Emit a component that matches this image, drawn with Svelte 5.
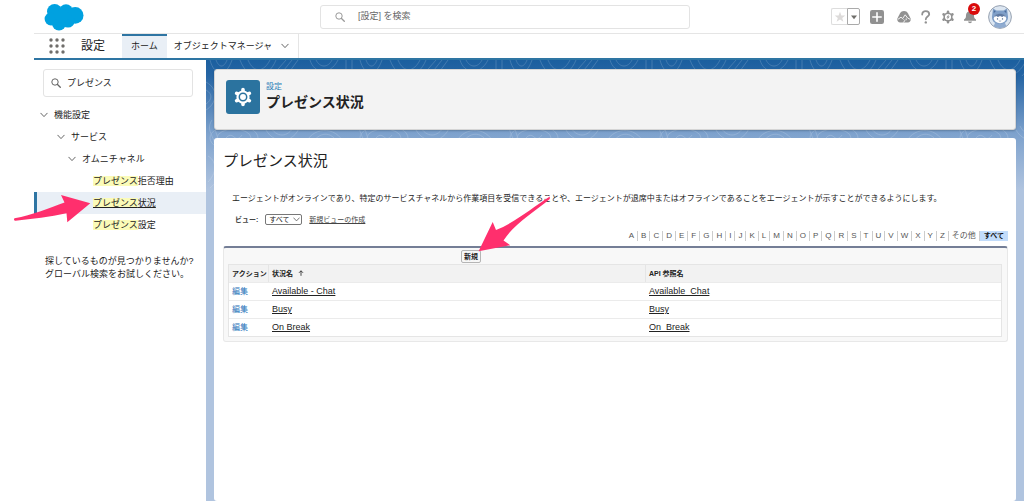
<script lang="ts">
  type Status = { label: string; apiName: string };

  const statuses: Status[] = [
    { label: 'Available - Chat', apiName: 'Available_Chat' },
    { label: 'Busy', apiName: 'Busy' },
    { label: 'On Break', apiName: 'On_Break' },
  ];

  const letters = [...'ABCDEFGHIJKLMNOPQRSTUVWXYZ', 'その他', 'すべて'];

  const branches = [
    { label: '機能設定', level: 'one' },
    { label: 'サービス', level: 'two' },
    { label: 'オムニチャネル', level: 'three' },
  ];

  const leaves = ['拒否理由', '状況', '設定'];

  let keyword = $state('プレゼンス');
  let view = $state('all');
  let activeLeaf = $state('状況');
  let activeLetter = $state('すべて');
</script>

{#snippet chevron()}
  <svg class="chevron" viewBox="0 0 8 8" aria-hidden="true">
    <path d="M0.8 2.2 4 5.6 7.2 2.2" fill="none" stroke="currentColor" stroke-width="0.9" stroke-linecap="round" />
  </svg>
{/snippet}

{#snippet magnifier()}
  <svg class="magnifier" viewBox="0 0 10 10" aria-hidden="true">
    <circle cx="4" cy="4" r="3.2" fill="none" stroke="currentColor" stroke-width="1" />
    <path d="M6.5 6.5 9.3 9.3" stroke="currentColor" stroke-width="1.3" stroke-linecap="round" />
  </svg>
{/snippet}

<!-- six-toothed cog, centred on 10,10 -->
{#snippet cog()}
  <circle cx="10" cy="10" r="6.6" fill="currentColor" />
  <path
    d="M10 2.600V17.400M3.600 6.300 16.400 13.700M3.600 13.700 16.400 6.300"
    fill="none"
    stroke="currentColor"
    stroke-width="3.600"
    stroke-linecap="round"
  />
{/snippet}

<div class="app">
  <header class="global">
    <svg class="logo" viewBox="0 0 40 28" role="img" aria-label="Salesforce">
      <g fill="#00a1e0">
        <circle cx="10.600" cy="8.600" r="7.600" />
        <circle cx="22" cy="8" r="6.800" />
        <circle cx="31.200" cy="12.400" r="8.300" />
        <circle cx="7" cy="16" r="6.400" />
        <circle cx="15" cy="20.500" r="7" />
        <circle cx="24" cy="18" r="6.600" />
        <circle cx="18" cy="13" r="7" />
      </g>
    </svg>

    <label class="search">
      {@render magnifier()}
      <input type="search" placeholder="[設定] を検索" aria-label="[設定] を検索" />
    </label>

    <div class="tools">
      <div class="favorites">
        <button aria-label="お気に入り" class="star">
          <svg viewBox="0 0 12 12"><path d="M6 .8 7.400 4.500h3.900L8.200 6.900l1.200 3.900L6 8.500l-3.400 2.300 1.200-3.900L.7 4.500h3.900z" fill="#dddbda" /></svg>
        </button>
        <button aria-label="お気に入りリスト" class="drop">
          <svg viewBox="0 0 8 8"><path d="M1 2.500h6L4 6.300z" fill="#706e6b" /></svg>
        </button>
      </div>
      <button class="tool add" aria-label="追加">
        <svg viewBox="0 0 14 14">
          <rect width="14" height="14" rx="2.200" />
          <path d="M7 2.800v8.400M2.800 7h8.400" stroke="#fff" stroke-width="1.600" stroke-linecap="round" />
        </svg>
      </button>
      <button class="tool" aria-label="Trailhead">
        <svg viewBox="0 0 14 14">
          <path d="M7 1c1.900 0 3 .9 3.900 2.300L13.400 8c1 2-.1 4.500-2.600 4.500H3.200C.7 12.500-.4 10 .6 8l2.500-4.700C4 1.900 5.100 1 7 1z" />
          <path d="M.8 9.400 4 7.200 5.600 8.600 8.200 4.800 10.600 8 13.300 9.400M6.400 12.500 7.800 10.600 6.600 9.400M9.200 8.400v1.800" fill="none" stroke="#fff" stroke-width="0.900" />
        </svg>
      </button>
      <button class="tool" aria-label="ヘルプ">
        <svg viewBox="0 0 14 14">
          <path d="M3.200 4.500C3.200 2.300 4.700 1.200 6.700 1.200S10.200 2.400 10.200 4.200C10.200 6.500 6.800 6.700 6.800 9.300" fill="none" stroke="currentColor" stroke-width="1.800" stroke-linecap="round" />
          <circle cx="6.800" cy="12.400" r="1.200" />
        </svg>
      </button>
      <button class="tool" aria-label="設定">
        <svg viewBox="0 0 20 20">
          {@render cog()}
          <circle cx="10" cy="10" r="4.400" fill="#fff" />
          <path d="M11.200 6 7.600 10.600h2L8.900 14l3.600-4.800h-2z" />
        </svg>
      </button>
      <button class="tool" aria-label="通知">
        <svg viewBox="0 0 14 14">
          <path d="M7 1.200c2.500 0 4 1.800 4 4.100 0 2.600.5 3.400 2 4.200v1.300H1V9.500c1.500-.8 2-1.600 2-4.200 0-2.300 1.500-4.100 4-4.100zM5 11.600h4c-.2 1.100-1 1.700-2 1.700s-1.800-.6-2-1.700z" />
        </svg>
        <span class="badge">2</span>
      </button>
      <button class="avatar" aria-label="プロファイルを表示">
        <svg viewBox="0 0 24 24">
          <circle cx="12" cy="12" r="11.400" fill="#dce6f1" stroke="#8d99a8" stroke-width="0.900" />
          <path d="M7 18h10l1.500 3.500-6.500 1.700-6.500-1.700z" fill="#8fabd0" />
          <path d="M5 3.600 8.500 5.400h7L19 3.600l.8 6.400C21 15 18 19 12 19S3 15 4.200 10z" fill="#7f9fc8" />
          <path d="M5.800 5.200 7.800 6.300 5.700 8.200zM18.200 5.200 16.200 6.300l2.100 1.900z" fill="#4a6c9c" />
          <ellipse cx="12" cy="13.600" rx="6.200" ry="4.600" fill="#fff" />
          <path d="M6.200 12.300C6.700 9.800 9 8.800 12 8.800s5.300 1 5.800 3.500l-2-1.200-1.600 1-2.200-1-2 1-1.800-1z" fill="#5f7aa2" />
          <circle cx="9.500" cy="13.900" r="0.700" fill="#405a80" />
          <circle cx="14.500" cy="13.900" r="0.700" fill="#405a80" />
          <path d="M10.800 15.800q1.200.9 2.400 0" fill="none" stroke="#405a80" stroke-width="0.500" />
        </svg>
      </button>
    </div>
  </header>

  <nav class="tabs" aria-label="設定">
    <button class="launcher" aria-label="アプリケーションランチャー">
      <svg viewBox="0 0 16 16">
        {#each [2, 8, 14] as y}
          {#each [2, 8, 14] as x}
            <circle cx={x} cy={y} r="1.700" fill="#706e6b" />
          {/each}
        {/each}
      </svg>
    </button>
    <span class="app-name">設定</span>
    <a class="tab current" href="#home">ホーム</a>
    <a class="tab objects" href="#objects">オブジェクトマネージャ {@render chevron()}</a>
  </nav>

  <div class="body">
    <aside>
      <label class="quick-find">
        {@render magnifier()}
        <input type="text" bind:value={keyword} aria-label="クイック検索" />
      </label>

      <ul class="tree">
        {#each branches as branch}
          <li class="branch {branch.level}">{@render chevron()}<span>{branch.label}</span></li>
        {/each}
        {#each leaves as leaf}
          <li class="leaf" class:active={leaf === activeLeaf}>
            <a href="#{leaf}" onclick={() => (activeLeaf = leaf)}><mark>プレゼンス</mark>{leaf}</a>
          </li>
        {/each}
      </ul>

      <p class="hint">探しているものが見つかりませんか?<br />グローバル検索をお試しください。</p>
    </aside>

    <main>
      <!-- contour lines behind the cards -->
      <svg class="contours" aria-hidden="true">
        <defs>
          <pattern id="contour" width="150" height="130" patternUnits="userSpaceOnUse">
            <g fill="none" stroke="#fff" stroke-width="0.800" opacity="0.200">
              <path d="M4 0C8 16 20 18 26 0M10 0c3 8 8 8 11 0M34 0C42 22 62 20 70 0M42 0c6 14 16 12 22 0M80 0 66 16M86 0 70 20M92 0 76 22M104 0c4 14 20 16 28 0M110 0c4 8 12 8 16 0M140 0v12M146 0v9" />
              <path d="M0 22C14 30 10 44 0 50M0 30c7 4 6 10 0 14M150 24c-12 8-8 22 0 26M6 60c-8 12 6 18 2 30M12 56c-10 12 6 24 0 36" />
              <ellipse cx="28" cy="78" rx="24" ry="13" />
              <ellipse cx="28" cy="78" rx="17" ry="9" />
              <path d="M20 78q4-5 8-1t8-2M20 81q6-3 14 0" />
              <path d="M58 66C66 86 88 84 94 66M64 66c6 12 18 12 24 0M100 84c4-16 30-20 38 0M106 84c6-12 20-14 26 0M114 84c3-6 8-6 12 0" />
              <path d="M2 96c10 6 8 18 0 26M8 92c12 12 6 28-4 36M142 90c-10 12-2 20 6 34M148 92c-8 10 0 20 2 22" />
            </g>
          </pattern>
        </defs>
        <rect width="100%" height="100%" fill="url(#contour)" />
      </svg>

      <section class="card page-header">
        <span class="page-icon">
          <svg viewBox="0 0 20 20" aria-hidden="true">
            {@render cog()}
            <circle cx="10" cy="10" r="3.700" fill="none" stroke="#2b739f" stroke-width="1.500" />
          </svg>
        </span>
        <div>
          <p class="crumb">設定</p>
          <h1>プレゼンス状況</h1>
        </div>
      </section>

      <section class="card content">
        <h2>プレゼンス状況</h2>
        <p class="description">
          エージェントがオンラインであり、特定のサービスチャネルから作業項目を受信できることや、エージェントが退席中またはオフラインであることをエージェントが示すことができるようにします。
        </p>

        <div class="view">
          <label for="view">ビュー:</label>
          <span class="select">
            <select id="view" bind:value={view}>
              <option value="all">すべて</option>
            </select>
            {@render chevron()}
          </span>
          <a href="#new-view">新規ビューの作成</a>
        </div>

        <div class="rolodex">
          {#each letters as letter}
            <a href="#{letter}" class:active={letter === activeLetter} onclick={() => (activeLetter = letter)}>{letter}</a>
          {/each}
        </div>

        <div class="list">
          <div class="list-actions"><button>新規</button></div>
          <table>
            <thead>
              <tr>
                <th class="action">アクション</th>
                <th>
                  状況名
                  <svg class="sort" viewBox="0 0 6 6" aria-label="昇順"><path d="M3 5.800V.8M1 2.800l2-2 2 2" fill="none" stroke="#333" stroke-width="0.900" /></svg>
                </th>
                <th class="api">API 参照名</th>
              </tr>
            </thead>
            <tbody>
              {#each statuses as status}
                <tr>
                  <td><a class="edit" href="#edit">編集</a></td>
                  <td><a href="#{status.apiName}">{status.label}</a></td>
                  <td><a href="#{status.apiName}">{status.apiName}</a></td>
                </tr>
              {/each}
            </tbody>
          </table>
        </div>
      </section>
    </main>
  </div>

  <!-- callout arrows -->
  <svg class="callout" viewBox="0 0 560 260" aria-hidden="true">
    <g fill="#ff2f6d">
      <path d="M14.500 218.300 C32 215 50 208 64.500 202.500 L61 195 L90.300 203.300 L67.300 222.300 L66.500 213.300 C50 217 32 219 15.500 220.800 C14 221 13.500 219 14.500 218.300z" />
      <path d="M549.800 196.500 C533 207 516 222 496 230 L492.700 222 L478.600 251.200 L510.300 245.300 L503.500 240.500 C514 224 533 213 549.800 199z" />
    </g>
  </svg>
</div>

<style>
  :global(body) {
    margin: 0;
    background: #fff;
  }

  .app {
    position: relative;
    display: flex;
    flex-direction: column;
    box-sizing: border-box;
    min-height: 100vh;
    padding-left: 34px;
    overflow: hidden;
    color: #222;
    font-family: 'Liberation Sans', 'Noto Sans CJK JP', sans-serif;
    font-size: 9px;
    line-height: 13px;
  }

  .app :is(h1, h2, p, ul) {
    margin: 0;
    padding: 0;
  }

  svg {
    display: block;
    flex: none;
  }

  a {
    color: inherit;
  }

  button,
  input,
  select {
    box-sizing: border-box;
    margin: 0;
    padding: 0;
    border: 0;
    background: none;
    color: inherit;
    font: inherit;
  }

  .chevron {
    width: 8px;
    height: 8px;
    color: #555;
  }

  .magnifier {
    width: 10px;
    height: 10px;
    color: #666;
  }

  /* Global header */
  .global {
    display: grid;
    grid-template-columns: 286px minmax(0, 370px) 1fr;
    align-items: center;
    height: 33px;
    border-bottom: 1px solid #e5e5e5;
  }

  .logo {
    width: 40px;
    height: 28px;
    margin-left: 10px;
  }

  .search {
    display: flex;
    align-items: center;
    gap: 13px;
    box-sizing: border-box;
    height: 24px;
    padding: 0 14px;
    border: 1px solid #e3e3e3;
    border-radius: 3px;
  }

  .search .magnifier {
    color: #999;
  }

  .search input,
  .quick-find input {
    flex: 1;
    min-width: 0;
    outline: 0;
  }

  .search input::placeholder {
    color: #666;
    opacity: 1;
  }

  .tools {
    display: flex;
    align-items: center;
    justify-content: flex-end;
    gap: 8px;
    padding-right: 12px;
  }

  .favorites {
    display: flex;
    margin-right: 2px;
  }

  .favorites button {
    display: grid;
    place-items: center;
    height: 17px;
    border: 1px solid #ddd;
  }

  .favorites .star {
    width: 16px;
    border-right: 0;
    border-radius: 2px 0 0 2px;
  }

  .favorites .drop {
    width: 13px;
    border-color: #aaa;
    border-radius: 0 2px 2px 0;
  }

  .star svg {
    width: 12px;
  }

  .drop svg {
    width: 8px;
  }

  .tool {
    position: relative;
    width: 14px;
    height: 14px;
    color: #919191;
    fill: currentColor;
  }

  .add {
    margin-right: 5px;
  }

  .badge {
    position: absolute;
    top: -7px;
    left: 5px;
    width: 12px;
    height: 12px;
    border-radius: 50%;
    background: #d90b0b;
    color: #fff;
    font-size: 8px;
    font-weight: bold;
    line-height: 12px;
  }

  .avatar {
    width: 24px;
    height: 24px;
    margin-left: 3px;
  }

  /* Tab bar */
  .tabs {
    display: flex;
    align-items: center;
    height: 24px;
    border-bottom: 2px solid #2e75a3;
  }

  .launcher {
    width: 16px;
    height: 16px;
    margin-left: 15px;
  }

  .app-name {
    margin: 0 17px 0 16px;
    font-size: 12px;
    line-height: 18px;
  }

  .tab {
    display: flex;
    align-items: center;
    align-self: stretch;
    padding: 0 9px;
    text-decoration: none;
  }

  .tab.current {
    border-top: 2px solid #2e75a3;
    padding-bottom: 2px;
    background: #e9eff6;
  }

  .objects {
    gap: 9px;
    padding-left: 7px;
    border-right: 1px solid #e5e5e5;
  }

  /* Setup tree */
  .body {
    flex: 1;
    display: grid;
    grid-template-columns: 172px minmax(0, 1fr);
  }

  .quick-find {
    display: flex;
    align-items: center;
    gap: 6px;
    box-sizing: border-box;
    height: 28px;
    margin: 9px 13px 7px 9px;
    padding: 0 7px;
    border: 1px solid #e3e3e3;
    border-radius: 3px;
  }

  .tree {
    list-style: none;
  }

  .tree li {
    display: flex;
    align-items: center;
    box-sizing: border-box;
    height: 22px;
  }

  .branch {
    gap: 6px;
  }

  .one {
    padding-left: 6px;
  }

  .two {
    padding-left: 23px;
  }

  .three {
    padding-left: 34px;
  }

  .leaf {
    padding-left: 59px;
  }

  .leaf a {
    text-decoration: none;
  }

  .leaf.active {
    padding-left: 56px;
    border-left: 3px solid #2e75a3;
    background: #e9eff6;
  }

  .leaf.active a {
    text-decoration: underline;
  }

  mark {
    background: #fbfbb8;
    color: inherit;
  }

  .app .hint {
    margin: 19px 0 0 11px;
    white-space: nowrap;
  }

  /* Main area */
  main {
    position: relative;
    display: flex;
    flex-direction: column;
    gap: 8px;
    padding: 9px 8px 0;
    background: #b0c4df linear-gradient(#1b5f9f, #2665a4 16px, #7ea2cd 74px, #b0c4df 130px);
  }

  .contours {
    position: absolute;
    inset: 0;
    width: 100%;
    height: 130px;
  }

  .card {
    position: relative;
    border-radius: 3px;
    background: #fff;
  }

  .page-header {
    display: flex;
    gap: 6px;
    box-sizing: border-box;
    height: 61px;
    padding: 10px 11px;
    border: 1px solid #d5d5d5;
    background: #f3f3f3;
    box-shadow: 0 1px 2px rgba(0, 0, 0, 0.2);
  }

  .page-icon {
    display: grid;
    place-items: center;
    width: 34px;
    height: 34px;
    border-radius: 3px;
    background: #2b739f;
    color: #fff;
  }

  .page-icon svg {
    width: 20px;
    height: 20px;
  }

  .crumb {
    color: #2b7fb8;
    font-size: 8px;
  }

  h1 {
    font-size: 14px;
    line-height: 18px;
  }

  .content {
    flex: 1;
    padding: 12px 8px 0 9px;
  }

  h2 {
    padding-left: 1px;
    font-size: 15px;
    font-weight: normal;
    line-height: 22px;
  }

  .app .description {
    margin: 20px 0 8px 9px;
    font-size: 8px;
  }

  .view {
    display: flex;
    align-items: center;
    gap: 7px;
    height: 13px;
    padding-left: 12px;
    color: #444;
    font-size: 7px;
  }

  .view label {
    font-weight: bold;
  }

  .select {
    display: grid;
    align-items: center;
  }

  .select > :global(*) {
    grid-area: 1 / 1;
  }

  .select .chevron {
    justify-self: end;
    width: 7px;
    height: 7px;
    margin-right: 2px;
    pointer-events: none;
  }

  select {
    width: 37px;
    height: 11px;
    padding-left: 3px;
    border: 1px solid #777;
    border-radius: 2px;
    appearance: none;
    color: #222;
    line-height: 9px;
  }

  .rolodex {
    display: flex;
    justify-content: flex-end;
    margin: 5px 0;
    color: #555;
    font-size: 8px;
    line-height: 10px;
  }

  .rolodex a {
    padding: 0 3px;
    border-right: 1px solid #ccc;
    text-decoration: none;
  }

  .rolodex a.active {
    padding: 0 4px;
    background: #c2dcfb;
    color: #111;
    font-size: 7px;
    font-weight: bold;
  }

  .rolodex a:last-child {
    border-right: 0;
  }

  /* Related list */
  .list {
    padding: 0 5px 4px 4px;
    border: 1px solid #e8e8e8;
    border-top: 2px solid #747e96;
    border-radius: 3px;
    background: #f8f8f8;
  }

  .list-actions {
    display: flex;
    height: 13px;
    padding: 2px 0 1px 233px;
  }

  .list-actions button {
    padding: 0 2px;
    border: 1px solid #b5b5b5;
    border-radius: 2px;
    background: #f7f7f7;
    font-size: 7px;
    font-weight: bold;
    line-height: 11px;
  }

  table {
    width: 100%;
    border: 1px solid #e5e5e5;
    border-spacing: 0;
    background: #fff;
    table-layout: fixed;
  }

  th,
  td {
    box-sizing: border-box;
    height: 18px;
    padding: 0 3px;
    text-align: left;
    font-size: 9px;
    line-height: 13px;
  }

  th {
    height: 17px;
    border-right: 1px solid #e5e5e5;
    background: #f2f2f2;
    font-size: 7px;
    white-space: nowrap;
  }

  th:last-child {
    border-right: 0;
  }

  td {
    border-top: 1px solid #ebebeb;
  }

  .action {
    width: 40px;
  }

  .api {
    width: 355px;
  }

  .sort {
    display: inline-block;
    width: 6px;
    height: 6px;
    margin-left: 3px;
  }

  .edit {
    color: #1d70b8;
    font-size: 8px;
    text-decoration: none;
  }

  .callout {
    position: absolute;
    top: 0;
    left: 0;
    width: 560px;
    height: 260px;
    pointer-events: none;
  }
</style>
